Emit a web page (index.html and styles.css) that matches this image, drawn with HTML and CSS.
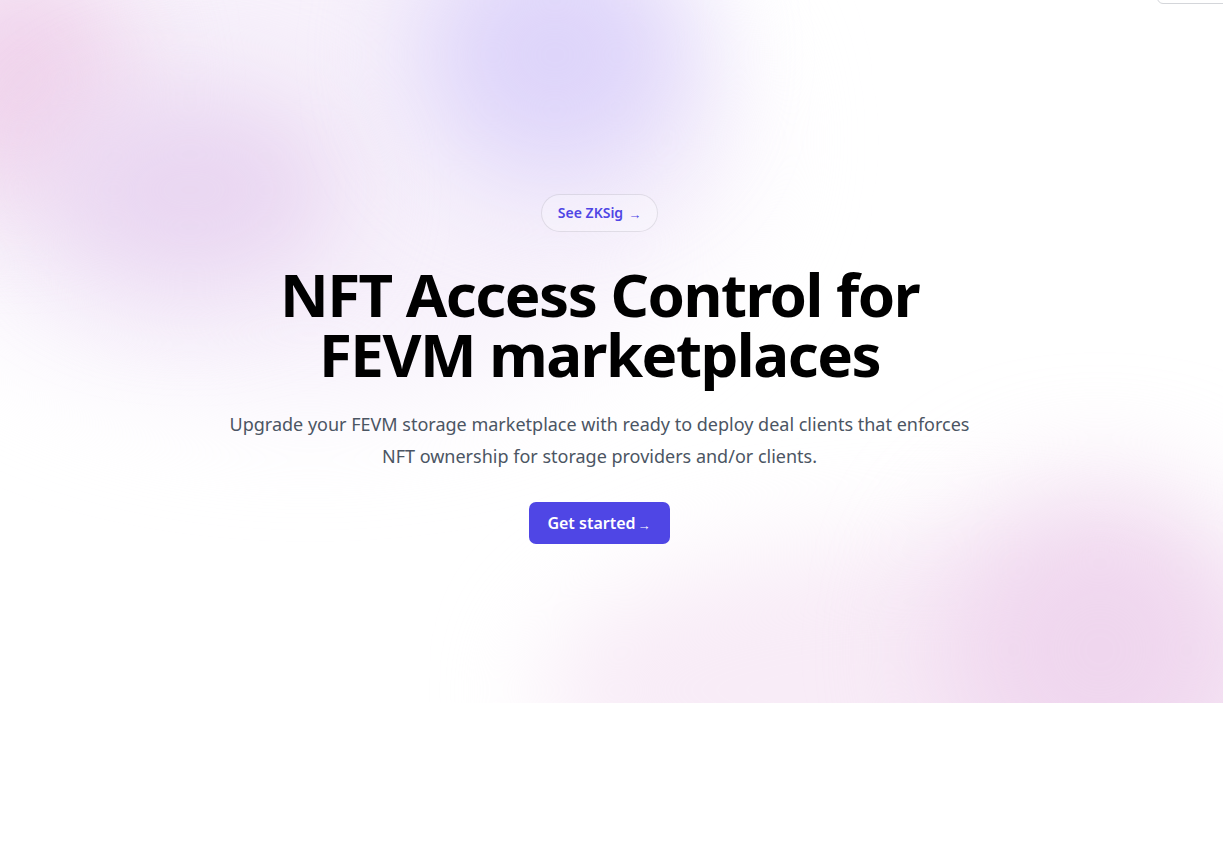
FILE: index.html
```html
<!DOCTYPE html>
<html lang="en">
<head>
<meta charset="utf-8">
<title>NFT Access Control for FEVM marketplaces</title>
<link rel="stylesheet" href="styles.css">
</head>
<body>
  <div class="corner-box"></div>
  <section class="hero">
    <div class="glow glow-haze"></div>
    <div class="glow glow-pink-edge"></div>
    <div class="glow glow-pink"></div>
    <div class="glow glow-lavender"></div>
    <div class="glow glow-bottom-haze"></div>
    <div class="glow glow-bottom-pink"></div>
    <div class="hero-content">
      <a class="badge" href="#">See ZKSig <span class="badge-arrow">→</span></a>
      <h1 class="title">NFT Access Control for<br>FEVM marketplaces</h1>
      <p class="lead">Upgrade your FEVM storage marketplace with ready to deploy deal clients that enforces NFT ownership for storage providers and/or clients.</p>
      <a class="cta" href="#">Get started<span class="cta-arrow">→</span></a>
    </div>
  </section>
</body>
</html>
```

FILE: styles.css
```css
* { box-sizing: border-box; }

html, body {
  margin: 0;
  padding: 0;
  background: #ffffff;
  font-family: "Noto Sans", "Open Sans", sans-serif;
}

.corner-box {
  position: absolute;
  top: -30px;
  right: -12px;
  width: 78px;
  height: 34px;
  border: 1px solid #d4d6da;
  border-radius: 6px;
  background: #ffffff;
  z-index: 5;
}

.hero {
  position: relative;
  height: 703px;
  overflow: hidden;
}

.glow {
  position: absolute;
  border-radius: 50%;
  pointer-events: none;
}

.glow-haze {
  left: -120px;
  top: -120px;
  width: 860px;
  height: 520px;
  background: #f7f1fb;
  filter: blur(60px);
}

.glow-pink-edge {
  left: -90px;
  top: -40px;
  width: 220px;
  height: 240px;
  background: #f0d4ec;
  filter: blur(50px);
}

.glow-pink {
  left: 40px;
  top: 90px;
  width: 300px;
  height: 200px;
  background: #e9d6f1;
  filter: blur(50px);
}

.glow-lavender {
  left: 420px;
  top: -70px;
  width: 270px;
  height: 250px;
  background: #ddd4fa;
  filter: blur(55px);
}

.glow-bottom-haze {
  left: 540px;
  top: 540px;
  width: 780px;
  height: 300px;
  background: #f8ecf7;
  filter: blur(50px);
}

.glow-bottom-pink {
  left: 940px;
  top: 490px;
  width: 320px;
  height: 320px;
  background: #efd6ee;
  filter: blur(60px);
}

.hero-content {
  position: relative;
  z-index: 1;
  display: flex;
  flex-direction: column;
  align-items: center;
  padding-top: 194px;
  padding-right: 24px;
  text-align: center;
}

.badge {
  display: inline-flex;
  align-items: baseline;
  gap: 5px;
  padding: 6px 16px;
  border: 1px solid rgba(17, 24, 39, 0.1);
  border-radius: 999px;
  font-size: 14px;
  line-height: 23px;
  font-weight: 600;
  color: #4f46e5;
  text-decoration: none;
  background: rgba(255, 255, 255, 0.25);
}

.badge-arrow {
  font-size: 13px;
  font-weight: 400;
  position: relative;
  top: 1px;
}

.title {
  margin: 32px 0 0;
  font-size: 60px;
  line-height: 60px;
  font-weight: 700;
  letter-spacing: -0.025em;
  color: #000000;
}

.lead {
  margin: 24px 0 0;
  max-width: 760px;
  font-size: 18px;
  line-height: 32px;
  color: #4b5563;
}

.cta {
  margin-top: 30px;
  display: inline-flex;
  align-items: baseline;
  height: 42px;
  padding: 9px 19px 0 18px;
  border-radius: 7px;
  background: #4f46e5;
  color: #ffffff;
  font-size: 16px;
  line-height: 24px;
  font-weight: 600;
  text-decoration: none;
}

.cta-arrow {
  font-size: 13px;
  font-weight: 400;
  margin-left: 2px;
  position: relative;
  top: 1px;
}
```
